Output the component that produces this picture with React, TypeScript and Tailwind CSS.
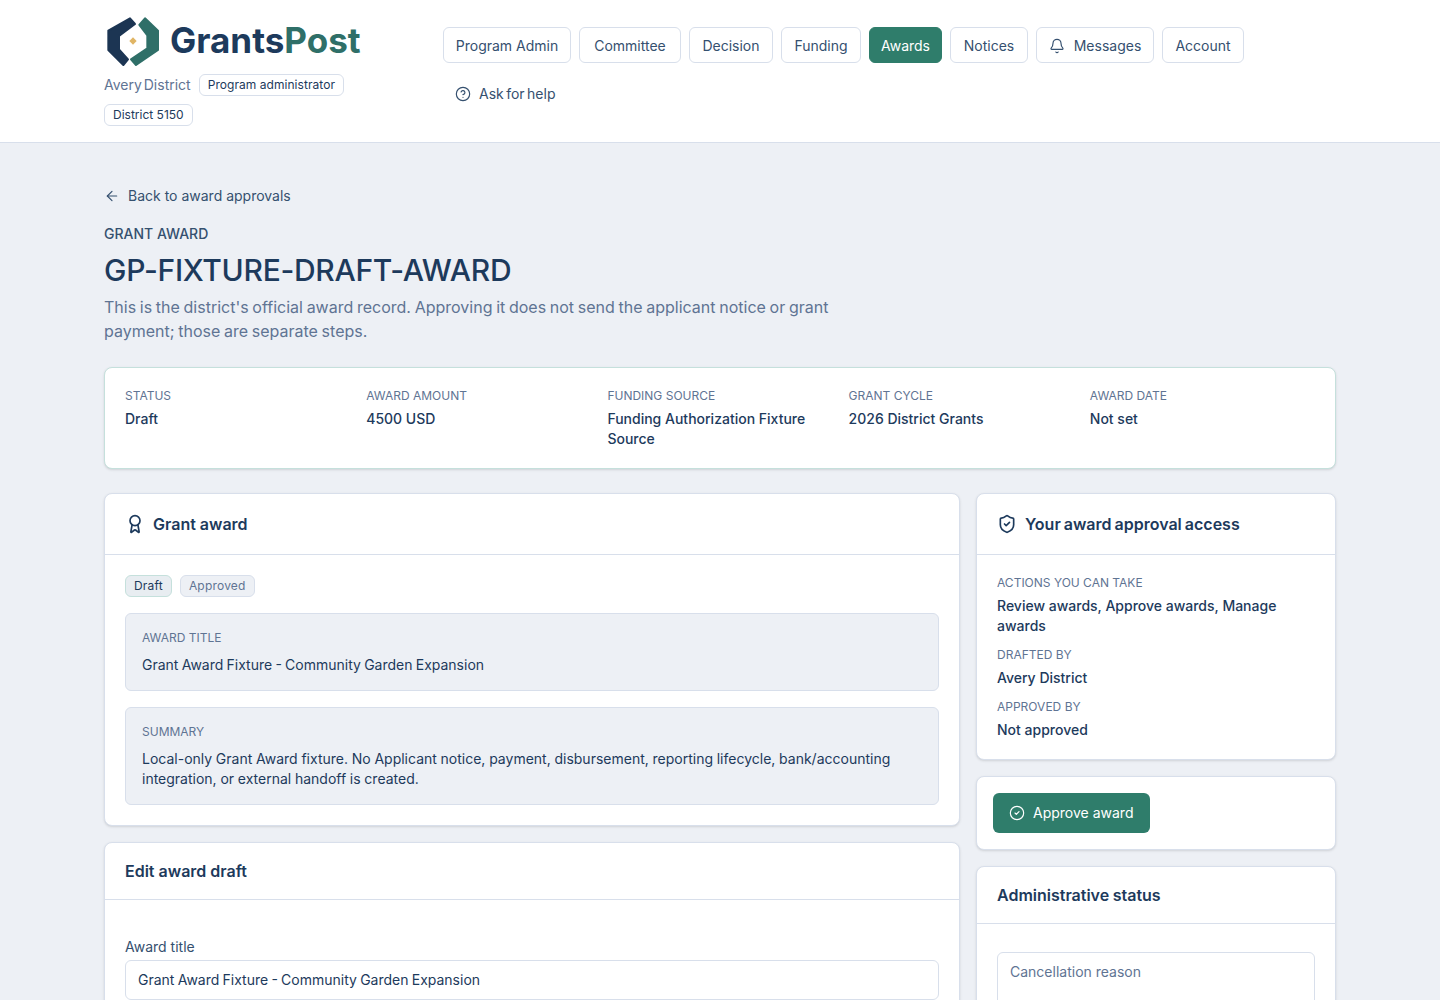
import { ArrowLeft, Award, Bell, CircleCheck, CircleHelp, ShieldCheck } from 'lucide-react';

const navItems = [
  { label: 'Program Admin', width: 'w-[128px]' },
  { label: 'Committee', width: 'w-[102px]' },
  { label: 'Decision', width: 'w-[84px]' },
  { label: 'Funding', width: 'w-[80px]' },
  { label: 'Awards', width: 'w-[73px]' },
  { label: 'Notices', width: 'w-[78px]' },
  { label: 'Messages', width: 'w-[118px]' },
  { label: 'Account', width: 'w-[82px]' },
];

const facts = [
  { label: 'Status', value: 'Draft' },
  { label: 'Award amount', value: '4500 USD' },
  { label: 'Funding source', value: 'Funding Authorization Fixture Source' },
  { label: 'Grant cycle', value: '2026 District Grants' },
  { label: 'Award date', value: 'Not set' },
];

function Logo() {
  return (
    <svg width="58" height="54" viewBox="12 12 174 162" className="shrink-0">
      <path
        d="M90 25 L25 62 V120 L70 165 L84 148 L57 118 V78 L105 42 Z"
        fill="#1c3553"
        stroke="#1c3553"
        strokeWidth="6"
        strokeLinejoin="round"
      />
      <path
        d="M135 25 L174 62 V120 L108 165 L93 148 L142 115 V76 L118 45 Z"
        fill="#2f6f68"
        stroke="#2f6f68"
        strokeWidth="6"
        strokeLinejoin="round"
      />
      <path d="M99 82 L110 93 L99 104 L88 93 Z" fill="#e0b565" />
    </svg>
  );
}

function Label({ children }: { children: React.ReactNode }) {
  return <div className="text-xs uppercase text-[#5f7493] leading-4">{children}</div>;
}

export default function App() {
  return (
    <div className="h-screen overflow-hidden bg-[#edf0f5] text-[#1d3a5c] font-['Inter','Liberation_Sans',sans-serif]">
      {/* Header */}
      <header className="h-[143px] bg-white border-b border-[#d8dfeb]">
        <div className="w-[1232px] mx-auto flex">
          <div className="w-[339px] shrink-0 pt-[14px]">
            <div className="flex items-center gap-[8px] h-[54px]">
              <Logo />
              <span className="text-[35px] font-bold leading-none pb-[2px]">
                Grants<span className="text-[#2f6f68]">Post</span>
              </span>
            </div>
            <div className="flex flex-wrap items-center gap-x-2 gap-y-2 mt-[6px] w-[250px]">
              <span className="text-sm text-[#5f7493] leading-[22px] [word-spacing:-2px]">Avery District</span>
              <span className="text-xs tracking-[0.05px] text-[#1d3a5c] border border-[#d8dfeb] rounded-md px-2 h-[22px] flex items-center">
                Program administrator
              </span>
              <span className="text-xs text-[#1d3a5c] border border-[#d8dfeb] rounded-md px-2 h-[22px] flex items-center">
                District 5150
              </span>
            </div>
          </div>
          <nav className="flex flex-wrap content-start gap-x-2 gap-y-[13px] pt-[27px] w-[820px]">
            {navItems.map((item) => (
              <a
                key={item.label}
                className={`${item.width} h-9 pt-[1px] rounded-md border flex items-center justify-center gap-[9px] text-sm ${
                  item.label === 'Awards'
                    ? 'bg-[#2f7d6b] border-[#2f7d6b] text-white'
                    : 'bg-white border-[#d8dfeb] text-[#35506f]'
                }`}
              >
                {item.label === 'Messages' && <Bell size={16} strokeWidth={1.75} />}
                {item.label}
              </a>
            ))}
            <a className="h-9 px-3 flex items-center gap-2 text-sm text-[#35506f] [word-spacing:-1.5px]">
              <CircleHelp size={16} strokeWidth={1.75} />
              Ask for help
            </a>
          </nav>
        </div>
      </header>

      <main className="w-[1232px] mx-auto pt-[41px]">
        <a className="flex items-center gap-2 h-6 text-sm text-[#35506f]">
          <ArrowLeft size={16} strokeWidth={1.75} />
          Back to award approvals
        </a>
        <div className="mt-4 text-sm font-medium leading-5 uppercase text-[#35506f]">Grant award</div>
        <h1 className="mt-[6px] text-[30px] leading-10 font-medium tracking-[-0.3px]">GP-FIXTURE-DRAFT-AWARD</h1>
        <p className="mt-[5px] text-base leading-6 text-[#5f7493] w-[760px] [word-spacing:-0.8px]">
          This is the district's official award record. Approving it does not send the applicant notice or grant
          payment; those are separate steps.
        </p>

        {/* Summary */}
        <section className="mt-6 h-[102px] bg-white border border-[#c5e0dc] rounded-lg px-5 pt-5 grid grid-cols-5 gap-x-4 shadow-sm">
          {facts.map((f) => (
            <div key={f.label}>
              <Label>{f.label}</Label>
              <div className="mt-[5px] text-sm font-medium leading-5">{f.value}</div>
            </div>
          ))}
        </section>

        <div className="mt-6 grid grid-cols-[856px_360px] gap-4 items-start">
          {/* Left column */}
          <div className="flex flex-col gap-4">
            <section className="bg-white border border-[#d8dfeb] rounded-lg shadow-sm">
              <div className="h-[61px] px-5 flex items-center gap-2 border-b border-[#d8dfeb]">
                <Award size={20} strokeWidth={2} />
                <h2 className="text-base font-semibold">Grant award</h2>
              </div>
              <div className="p-5 flex flex-col gap-4">
                <div className="flex gap-2">
                  <span className="h-[22px] px-2 flex items-center text-xs tracking-[0.2px] rounded-md bg-[#e8edf1] border border-[#c5e0dc]">Draft</span>
                  <span className="h-[22px] px-2 flex items-center text-xs tracking-[0.2px] rounded-md bg-[#edf0f5] border border-[#d8dfeb] text-[#5f7493]">Approved</span>
                </div>
                <div className="h-[78px] bg-[#edf0f5] border border-[#d8dfeb] rounded-md px-4 pt-4">
                  <Label>Award title</Label>
                  <div className="mt-[9px] text-sm leading-5 [word-spacing:-0.7px]">Grant Award Fixture - Community Garden Expansion</div>
                </div>
                <div className="h-[98px] bg-[#edf0f5] border border-[#d8dfeb] rounded-md px-4 pt-4">
                  <Label>Summary</Label>
                  <div className="mt-[9px] text-sm leading-5 [word-spacing:-0.2px]">
                    Local-only Grant Award fixture. No Applicant notice, payment, disbursement, reporting lifecycle, bank/accounting integration, or external handoff is created.
                  </div>
                </div>
              </div>
            </section>

            <section className="bg-white border border-[#d8dfeb] rounded-lg shadow-sm">
              <div className="h-[57px] px-5 flex items-center border-b border-[#d8dfeb]">
                <h2 className="text-base font-semibold">Edit award draft</h2>
              </div>
              <div className="px-5 pt-[37px] pb-5">
                <div className="text-sm leading-5 text-[#35506f]">Award title</div>
                <div className="mt-[3px] h-10 px-3 flex items-center text-sm bg-white border border-[#d8dfeb] rounded-md [word-spacing:-0.7px]">
                  Grant Award Fixture - Community Garden Expansion
                </div>
              </div>
            </section>
          </div>

          {/* Right column */}
          <div className="flex flex-col gap-4">
            <section className="bg-white border border-[#d8dfeb] rounded-lg shadow-sm">
              <div className="h-[61px] px-5 flex items-center gap-2 border-b border-[#d8dfeb]">
                <ShieldCheck size={20} strokeWidth={2} />
                <h2 className="text-base font-semibold [word-spacing:-1px]">Your award approval access</h2>
              </div>
              <div className="px-5 pt-5 pb-[19px]">
                <Label>Actions you can take</Label>
                <div className="mt-[5px] text-sm font-medium leading-5">Review awards, Approve awards, Manage awards</div>
                <div className="mt-[11px]"><Label>Drafted by</Label></div>
                <div className="mt-[5px] text-sm font-medium leading-5">Avery District</div>
                <div className="mt-[11px]"><Label>Approved by</Label></div>
                <div className="mt-[5px] text-sm font-medium leading-5">Not approved</div>
              </div>
            </section>

            <section className="bg-white border border-[#d8dfeb] rounded-lg shadow-sm p-4">
              <button className="w-[157px] h-10 px-4 flex items-center gap-2 rounded-md bg-[#2f7d6b] text-white text-sm">
                <CircleCheck size={16} strokeWidth={1.75} />
                Approve award
              </button>
            </section>

            <section className="bg-white border border-[#d8dfeb] rounded-lg shadow-sm">
              <div className="h-[57px] px-5 flex items-center border-b border-[#d8dfeb]">
                <h2 className="text-base font-semibold [word-spacing:-0.5px]">Administrative status</h2>
              </div>
              <div className="px-5 pt-7">
                <div className="h-24 px-3 pt-[9px] text-sm text-[#5f7493] bg-white border border-[#d8dfeb] rounded-md">
                  Cancellation reason
                </div>
              </div>
            </section>
          </div>
        </div>
      </main>
    </div>
  );
}
